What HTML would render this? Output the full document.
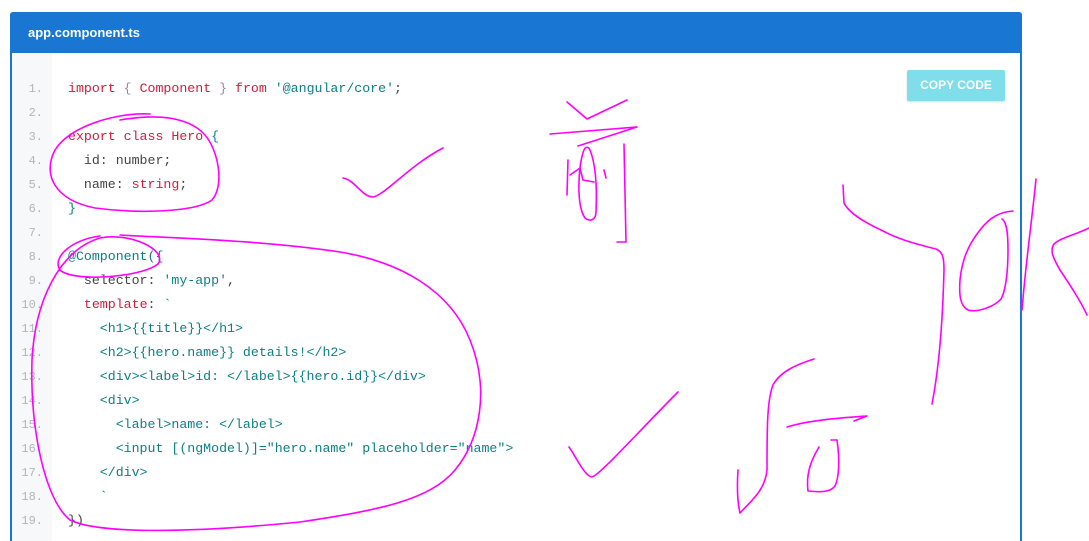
<!DOCTYPE html>
<html><head><meta charset="utf-8"><style>
html,body{margin:0;padding:0;background:#fff;width:1089px;height:541px;overflow:hidden;position:relative;font-family:"Liberation Sans",sans-serif}
.box{position:absolute;left:10px;top:12px;width:1012px;height:529px;border:2px solid #1976d2;border-bottom:none;border-top:none;box-sizing:border-box;border-radius:3px 3px 0 0}
.hdr{position:absolute;left:10px;top:12px;width:1012px;height:41px;background:#1976d2;border-radius:3px 3px 0 0;color:#fff;font-weight:bold;font-size:13px;line-height:41px;box-sizing:border-box;padding-left:18px}
.gut{position:absolute;left:12px;top:53px;width:40px;height:488px;background:#f7f8f9}
.ln{position:absolute;left:12px;width:31px;text-align:right;color:#b0b6bc;font-family:"Liberation Mono",monospace;font-size:12px}
.cd{position:absolute;left:68px;white-space:pre;font-family:"Liberation Mono",monospace;font-size:13.25px;color:#444}
.k{color:#d7193f}.s{color:#0b7f86}.g{color:#8a9296}
.btn{position:absolute;left:907px;top:70px;width:98px;height:31px;background:#80deea;color:#fff;font-weight:bold;font-size:12px;text-align:center;line-height:31px;border-radius:2px;box-shadow:0 1px 2px rgba(0,0,0,.15)}
svg{position:absolute;left:0;top:0}
</style></head><body>
<div class="box"></div>
<div class="hdr">app.component.ts</div>
<div class="gut"></div>
<div class="btn">COPY CODE</div>

<div class="ln" style="top:82px">1.</div>
<div class="ln" style="top:106px">2.</div>
<div class="ln" style="top:130px">3.</div>
<div class="ln" style="top:154px">4.</div>
<div class="ln" style="top:178px">5.</div>
<div class="ln" style="top:202px">6.</div>
<div class="ln" style="top:226px">7.</div>
<div class="ln" style="top:250px">8.</div>
<div class="ln" style="top:274px">9.</div>
<div class="ln" style="top:298px">10.</div>
<div class="ln" style="top:322px">11.</div>
<div class="ln" style="top:346px">12.</div>
<div class="ln" style="top:370px">13.</div>
<div class="ln" style="top:394px">14.</div>
<div class="ln" style="top:418px">15.</div>
<div class="ln" style="top:442px">16.</div>
<div class="ln" style="top:466px">17.</div>
<div class="ln" style="top:490px">18.</div>
<div class="ln" style="top:514px">19.</div>

<div class="cd" style="top:81px"><span class="k">import</span> <span class="g">{</span> <span class="k">Component</span> <span class="g">}</span> <span class="k">from</span> <span class="s">'@angular/core'</span>;</div>
<div class="cd" style="top:129px"><span class="k">export class Hero</span> <span class="s">{</span></div>
<div class="cd" style="top:153px">  id: number;</div>
<div class="cd" style="top:177px">  name: <span class="k">string</span>;</div>
<div class="cd" style="top:201px"><span class="s">}</span></div>
<div class="cd" style="top:249px"><span class="s">@Component({</span></div>
<div class="cd" style="top:273px">  selector: <span class="s">'my-app'</span>,</div>
<div class="cd" style="top:297px">  <span class="k">template</span>: <span class="s">`</span></div>
<div class="cd s" style="top:321px">    &lt;h1&gt;{{title}}&lt;/h1&gt;</div>
<div class="cd s" style="top:345px">    &lt;h2&gt;{{hero.name}} details!&lt;/h2&gt;</div>
<div class="cd s" style="top:369px">    &lt;div&gt;&lt;label&gt;id: &lt;/label&gt;{{hero.id}}&lt;/div&gt;</div>
<div class="cd s" style="top:393px">    &lt;div&gt;</div>
<div class="cd s" style="top:417px">      &lt;label&gt;name: &lt;/label&gt;</div>
<div class="cd s" style="top:441px">      &lt;input [(ngModel)]="hero.name" placeholder="name"&gt;</div>
<div class="cd s" style="top:465px">    &lt;/div&gt;</div>
<div class="cd s" style="top:489px">    `</div>
<div class="cd" style="top:513px">})</div>

<svg width="1089" height="541" viewBox="0 0 1089 541" fill="none" stroke="#ff00ff" stroke-width="1.6" stroke-linecap="round" stroke-linejoin="round">
<path d="M150,114 C120,112 70,125 55,150 C42,175 55,200 95,208 C140,214 195,212 212,200 C225,185 218,150 205,135 C190,118 160,113 120,120"/>
<path d="M100,236 C70,240 52,258 60,270 C72,282 140,278 158,264 C168,250 130,232 100,238 C60,250 35,300 32,360 C30,430 45,500 70,520 C100,535 200,532 300,522 C380,510 430,500 455,470 C480,440 490,390 470,340 C450,290 400,262 340,252 C260,240 170,238 120,235"/>
<path d="M343,178 C355,180 362,197 373,197 C385,195 410,165 443,148"/>
<path d="M567,102 L587,119 L627,100"/>
<path d="M550,134 L637,127 L578,146"/>
<path d="M568,160 L567,195"/>
<path d="M584,150 C578,165 576,205 585,218 C590,222 596,220 596,212 C597,190 596,165 590,150 C588,146 585,147 584,150"/>
<path d="M570,175 L580,168 L583,180 L594,182"/>
<path d="M604,170 L606,178"/>
<path d="M624,144 L626,242 L617,242"/>
<path d="M569,447 C575,455 585,477 592,477 C600,475 640,430 678,392"/>
<path d="M814,359 C795,365 780,372 773,385 C767,400 767,430 767,470 C765,490 752,500 740,513 C737,500 737,485 738,470"/>
<path d="M787,427 C810,420 840,418 867,416 L854,421"/>
<path d="M831,440 L837,440 C840,460 839,478 835,486 C830,493 818,492 808,491 C806,475 810,462 819,447"/>
<path d="M843,185 L844,203 C850,215 870,225 883,231 C900,240 920,245 936,249 C943,252 944,258 944,270 C943,310 940,363 932,404"/>
<path d="M1013,211 C1000,212 990,217 980,230 C968,245 962,260 960,280 C959,295 960,306 968,310 C978,313 995,306 1001,299 C1006,290 1008,270 1008,250 C1008,235 1007,222 1002,219"/>
<path d="M1036,179 C1032,220 1026,260 1022,310"/>
<path d="M1089,228 C1075,235 1060,238 1054,244 C1050,250 1052,256 1060,270 C1070,285 1080,300 1087,315"/>
</svg>
</body></html>
